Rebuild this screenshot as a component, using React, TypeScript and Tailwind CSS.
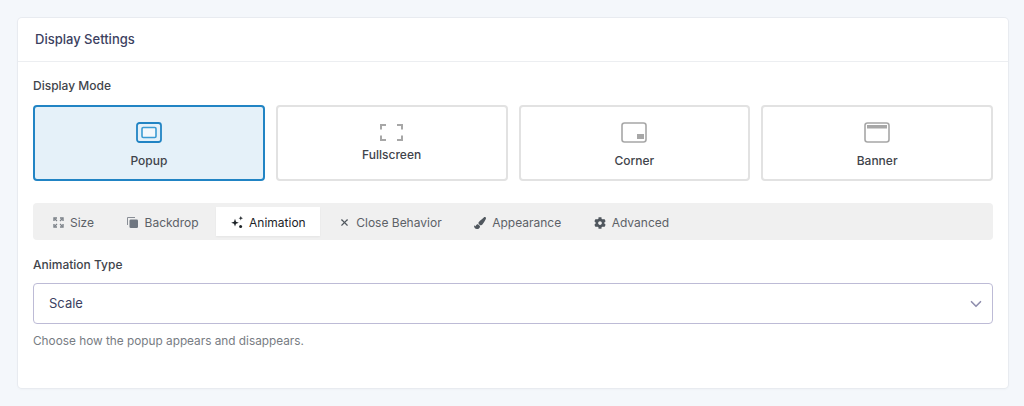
import { ChevronDown, X } from "lucide-react"
import { FaCog, FaPaintBrush } from "react-icons/fa"

const modes = [
  { label: "Popup", active: true, icon: PopupIcon, spacing: "gap-[10px] pt-[15px]" },
  { label: "Fullscreen", active: false, icon: FullscreenIcon, spacing: "gap-[6px] pt-[17px]" },
  { label: "Corner", active: false, icon: CornerIcon, spacing: "gap-[10px] pt-[15px]" },
  { label: "Banner", active: false, icon: BannerIcon, spacing: "gap-[10px] pt-[15px]" },
]

function PopupIcon() {
  return (
    <svg width="26" height="21" viewBox="0 0 26 21" fill="none">
      <rect x="1" y="1" width="24" height="19" rx="2.5" stroke="#2184c4" strokeWidth="1.8" />
      <rect x="6" y="5.5" width="14" height="10" rx="1.2" fill="#f3f8fc" stroke="#3b9bd3" strokeWidth="1.6" />
    </svg>
  )
}

function FullscreenIcon() {
  return (
    <svg width="23" height="17" viewBox="0 0 23 17" fill="none" stroke="#a7a7a7" strokeWidth="2">
      <path d="M6 1H1v4.5M17 1h5v4.5M1 11.500v4.500h5M22 11.500v4.500h-5" />
    </svg>
  )
}

function CornerIcon() {
  return (
    <svg width="26" height="21" viewBox="0 0 26 21" fill="none">
      <rect x="1" y="1" width="24" height="19" rx="2.5" stroke="#a7a7a7" strokeWidth="1.6" />
      <rect x="16" y="12" width="7" height="5" fill="#a7a7a7" />
    </svg>
  )
}

function BannerIcon() {
  return (
    <svg width="26" height="21" viewBox="0 0 26 21" fill="none">
      <rect x="1" y="1" width="24" height="19" rx="2.5" stroke="#a7a7a7" strokeWidth="1.6" />
      <rect x="3" y="3" width="20" height="3.500" fill="#a7a7a7" />
    </svg>
  )
}

function SizeIcon() {
  return (
    <svg width="11" height="11" viewBox="0 0 11 11" fill="none" stroke="#7b8188" strokeWidth="1.400">
      <path d="M1 4V1h3M7 1h3v3M1 7v3h3M10 7v3H7" />
      <path d="M1.500 1.500l2.500 2.500M9.500 1.500L7 4M1.500 9.500L4 7M9.500 9.500L7 7" strokeWidth="1.200" />
    </svg>
  )
}

function BackdropIcon() {
  return (
    <svg width="11" height="11" viewBox="0 0 11 11" fill="#6f7680">
      <path d="M0 1.200C0 .5.500 0 1.200 0H8v1H1v7H0z" opacity="0.8" />
      <rect x="2.500" y="2.500" width="8.500" height="8.500" rx="1.300" />
    </svg>
  )
}

function SparkIcon() {
  return (
    <svg width="14" height="13" viewBox="0 0 14 13" fill="#1d2327">
      <path d="M5 2.800l1 2.900 2.800 1-2.800 1-1 2.900-1-2.900-2.800-1 2.800-1z" />
      <path d="M10.800 0l.6 1.600 1.600.6-1.600.6-.6 1.600-.6-1.600-1.600-.6 1.600-.6z" />
      <circle cx="10.600" cy="10.600" r="1.500" />
    </svg>
  )
}

const tabs = [
  { label: "Size", icon: <SizeIcon /> },
  { label: "Backdrop", icon: <BackdropIcon /> },
  { label: "Animation", icon: <SparkIcon />, active: true },
  { label: "Close Behavior", icon: <X className="size-[11px] text-[#50575e]" strokeWidth={2.5} /> },
  { label: "Appearance", icon: <FaPaintBrush className="size-[12px] text-[#50575e]" /> },
  { label: "Advanced", icon: <FaCog className="size-[12px] text-[#50575e]" /> },
]

export default function App() {
  return (
    <div className="h-[406px] w-[1024px] overflow-hidden bg-[#f4f7fb] pb-[18px] pl-[18px] pr-[16px] pt-[18px] font-['Inter',sans-serif]">
      <div className="h-[370px] rounded-[4px] bg-white shadow-[0_0_0_1px_#e8ebf0,0_1px_3px_rgba(0,0,0,0.05)]">
        {/* Header */}
        <div className="flex h-[44px] items-center border-b border-[#eceef1] px-[17px] pt-px text-[13px] font-medium text-[#3c3f5f]">
          Display Settings
        </div>

        <div className="px-[15px] pt-[16px]">
          <div className="text-[12px] font-medium leading-[16px] text-[#3f444b]">Display Mode</div>

          {/* Mode cards */}
          <div className="mt-[11px] grid grid-cols-4 gap-[11px]">
            {modes.map((mode) => (
              <div
                key={mode.label}
                className={
                  mode.active
                    ? `flex h-[76px] flex-col items-center ${mode.spacing} rounded-[4px] border-2 border-[#2184c4] bg-[#e5f1f9]`
                    : `flex h-[76px] flex-col items-center ${mode.spacing} rounded-[4px] border-2 border-[#e2e2e2] bg-white`
                }
              >
                <mode.icon />
                <span className="text-[12px] font-medium leading-[15px] text-[#3f444b]">{mode.label}</span>
              </div>
            ))}
          </div>

          {/* Tabs */}
          <div className="mt-[22px] flex h-[37px] items-center gap-[3.5px] rounded-[4px] bg-[#f0f0f0] pl-1">
            {tabs.map((tab) => (
              <div
                key={tab.label}
                className={
                  tab.active
                    ? "flex h-[29px] items-center gap-[5px] bg-white px-[14px] pt-[2px] text-[12px] text-[#1d2327] shadow-[0_1px_2px_rgba(0,0,0,0.05)]"
                    : "flex h-[29px] items-center gap-[5px] px-[14px] pt-[2px] text-[12px] text-[#5c6167]"
                }
              >
                <span className="flex w-[14px] justify-center">{tab.icon}</span>
                <span>{tab.label}</span>
              </div>
            ))}
          </div>

          <div className="mt-[17px] text-[12px] font-medium leading-[16px] text-[#3f444b]">Animation Type</div>

          {/* Select */}
          <div className="mt-[10px] flex h-[41px] items-center justify-between rounded-[4px] border border-[#bdbbd6] bg-white pl-[15px] pr-[7px]">
            <span className="pt-px text-[13px] text-[#3c3f5f]">Scale</span>
            <ChevronDown className="size-[18px] text-[#8f8eae]" strokeWidth={2.200} />
          </div>

          <p className="mt-[9px] text-[11.800px] leading-[16px] text-[#777c83]">Choose how the popup appears and disappears.</p>
        </div>
      </div>
    </div>
  )
}
